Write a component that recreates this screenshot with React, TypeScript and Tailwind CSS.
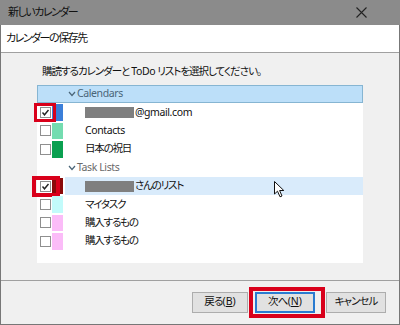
const FONT = "font-['Noto_Sans','Noto_Sans_CJK_JP',sans-serif] [font-feature-settings:'palt']"

type Row =
  | { kind: 'group'; label: string; fill?: boolean }
  | { kind: 'item'; label: string; swatch: string; jp?: boolean; checked?: boolean; redacted?: boolean; selected?: boolean; mark?: 'small' | 'wide' }

const ROWS: Row[] = [
  { kind: 'group', label: 'Calendars', fill: true },
  { kind: 'item', label: '@gmail.com', swatch: 'bg-[#3b7fd9]', checked: true, redacted: true, mark: 'small' },
  { kind: 'item', label: 'Contacts', swatch: 'bg-[#74dcb0]' },
  { kind: 'item', label: '日本の祝日', swatch: 'bg-[#0aa050]', jp: true },
  { kind: 'group', label: 'Task Lists' },
  { kind: 'item', label: 'さんのリスト', swatch: 'bg-[#8a0a0a]', jp: true, checked: true, redacted: true, selected: true, mark: 'wide' },
  { kind: 'item', label: 'マイタスク', swatch: 'bg-[#c2fbfb]', jp: true },
  { kind: 'item', label: '購入するもの', swatch: 'bg-[#fbbcf8]', jp: true },
  { kind: 'item', label: '購入するもの', swatch: 'bg-[#fbbcf8]', jp: true },
]

function Chevron() {
  return (
    <svg width="8" height="6" viewBox="0 0 8 6" className="mr-[1px]">
      <polyline points="1,1 4,4.5 7,1" fill="none" stroke="#4a6578" strokeWidth="1.2" />
    </svg>
  )
}

function Check({ checked }: { checked?: boolean }) {
  return (
    <div className="w-[11px] h-[11px] border border-[#8f8f8f] bg-white flex items-center justify-center shrink-0">
      {checked && (
        <svg width="9" height="9" viewBox="0 0 9 9">
          <polyline points="1.5,4.5 3.5,6.8 7.5,2" fill="none" stroke="#222" strokeWidth="1.4" />
        </svg>
      )}
    </div>
  )
}

function ListRow({ row }: { row: Row }) {
  if (row.kind === 'group') {
    return (
      <div
        className={
          row.fill
            ? 'h-[18.4px] flex items-center pl-[30px] bg-[#bcdff9] border border-[#86b5d2] text-[#4a6578] text-[10.5px] tracking-[-0.4px]'
            : 'h-[18.4px] flex items-center pl-[31px] text-[#6a6a6a] text-[10.5px] tracking-[-0.4px]'
        }
      >
        <Chevron />
        <span>{row.label}</span>
      </div>
    )
  }
  return (
    <div className="h-[18.4px] flex items-stretch relative">
      <div className="w-[15px] flex items-center pl-[3px] shrink-0">
        <Check checked={row.checked} />
      </div>
      <div className={`w-[11px] my-[1px] shrink-0 ${row.swatch}`} />
      <div
        className={`flex-1 flex items-center pl-[20px] text-[#111] ml-[2px] ${row.selected ? 'bg-[#d9ebfb]' : ''}`}
      >
        {row.redacted && <div className="w-[49px] h-[11px] bg-[#7f7f7f] mr-[1px]" />}
        <span className={row.jp ? 'text-[10.5px] tracking-[-1.2px]' : 'text-[10.5px] tracking-[-0.4px]'}>{row.label}</span>
      </div>
      {row.mark === 'small' && (
        <div className="absolute left-[-3px] top-[0px] w-[22px] h-[19px] border-[3px] border-[#d9001b]" />
      )}
      {row.mark === 'wide' && (
        <div className="absolute left-[-5px] top-[-1px] w-[28px] h-[21px] border-[4px] border-[#d9001b]" />
      )}
    </div>
  )
}

function Cursor() {
  return (
    <svg width="12" height="17" viewBox="0 0 12 17" className="absolute left-[237px] top-[96px]">
      <path d="M0.5,0.5 L0.5,13 L3.5,10.2 L6,15.8 L8,15 L5.6,9.5 L9.8,9.5 Z" fill="#fff" stroke="#111" strokeWidth="1" strokeLinejoin="round" />
    </svg>
  )
}

function Btn({ label, hot, primary, w }: { label: string; hot: string; primary?: boolean; w: string }) {
  return (
    <div className={`relative ${w}`}>
      <button
        type="button"
        className={`w-full h-[21px] flex items-center justify-center text-[10.5px] text-[#111] bg-[#e1e1e1] ${
          primary ? 'border-2 border-[#2a7bd0]' : 'border border-[#adadad]'
        }`}
      >
        <span className="tracking-[-0.8px]">{label}</span>(<span className="underline">{hot}</span>)
      </button>
      {primary && (
        <div className="absolute left-[-6px] right-[-10px] top-[-5px] bottom-[-5px] border-[4px] border-[#d9001b]" />
      )}
    </div>
  )
}

export default function App() {
  return (
    <div className={`w-[400px] h-[325px] flex flex-col bg-[#f0f0f0] border-x border-b border-[#777] ${FONT}`}>
      <div className="h-[25px] shrink-0 bg-[#8b8b8b] flex items-center justify-between pl-[8px] pr-[33px] -mx-px">
        <span className="text-[11px] tracking-[-1.5px] text-[#111]">新しいカレンダー</span>
        <svg width="11" height="11" viewBox="0 0 11 11">
          <path d="M0.5,0.5 L10.5,10.5 M10.5,0.5 L0.5,10.5" stroke="#222" strokeWidth="1.1" />
        </svg>
      </div>

      <div className="h-[28px] shrink-0 bg-white border-b border-[#a0a0a0] flex items-center pl-[5px] text-[11px] tracking-[-1.5px] text-[#111]">
        カレンダーの保存先
      </div>

      <div className="flex-1 flex flex-col pt-[10px]">
        <div className="h-[16px] pl-[41px] text-[10.5px] tracking-[-1px] text-[#111] leading-[16px]">
          購読するカレンダーと <span className="tracking-[-0.3px]">ToDo</span> リストを選択してください。
        </div>
        <div className="mt-[6px] ml-[36px] w-[326px] h-[178px] bg-white relative">
          {ROWS.map((r, i) => (
            <ListRow key={i} row={r} />
          ))}
          <Cursor />
        </div>
      </div>

      <div className="h-[44px] shrink-0 border-t border-[#a0a0a0] flex items-center justify-end pr-[13px] pb-[1px]">
        <div className="flex items-center">
          <Btn label="戻る" hot="B" w="w-[56px]" />
          <div className="w-[7px]" />
          <Btn label="次へ" hot="N" primary w="w-[60px]" />
          <div className="w-[11px]" />
          <button
            type="button"
            className="w-[60px] h-[21px] flex items-center justify-center text-[10.5px] tracking-[-1px] text-[#111] bg-[#e1e1e1] border border-[#adadad]"
          >
            キャンセル
          </button>
        </div>
      </div>
    </div>
  )
}
